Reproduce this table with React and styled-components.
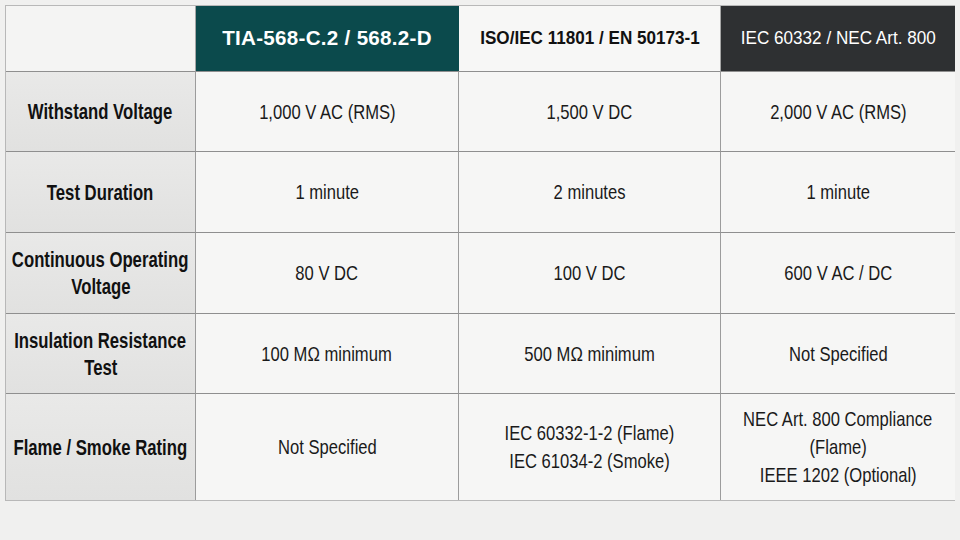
import React from "react";
import styled, { createGlobalStyle } from "styled-components";

const GlobalStyle = createGlobalStyle`
  html, body {
    margin: 0;
    padding: 0;
    background: #f0f0ef;
  }
  body {
    font-family: "Liberation Sans", Arial, sans-serif;
  }
`;

const headers = [
  { text: "", tone: "blank" },
  { text: "TIA-568-C.2 / 568.2-D", tone: "teal" },
  { text: "ISO/IEC 11801 / EN 50173-1", tone: "light" },
  { text: "IEC 60332 / NEC Art. 800", tone: "dark" },
];

const rows = [
  {
    label: ["Withstand Voltage"],
    cells: [["1,000 V AC (RMS)"], ["1,500 V DC"], ["2,000 V AC (RMS)"]],
  },
  {
    label: ["Test Duration"],
    cells: [["1 minute"], ["2 minutes"], ["1 minute"]],
  },
  {
    label: ["Continuous Operating", "Voltage"],
    cells: [["80 V DC"], ["100 V DC"], ["600 V AC / DC"]],
  },
  {
    label: ["Insulation Resistance", "Test"],
    cells: [["100 MΩ minimum"], ["500 MΩ minimum"], ["Not Specified"]],
  },
  {
    label: ["Flame / Smoke Rating"],
    cells: [
      ["Not Specified"],
      ["IEC 60332-1-2 (Flame)", "IEC 61034-2 (Smoke)"],
      ["NEC Art. 800 Compliance", "(Flame)", "IEEE 1202 (Optional)"],
    ],
    last: true,
  },
];

const App = () => {
  return (
    <>
      <GlobalStyle />
      <Page>
        <Table>
          {headers.map((h, i) => (
            <HeadCell key={i} tone={h.tone}>
              <Squeeze sx={h.tone === "teal" ? 0.98 : 0.9}>{h.text}</Squeeze>
            </HeadCell>
          ))}
          {rows.map((r, ri) => (
            <React.Fragment key={ri}>
              <LabelCell last={r.last}>
                {r.label.map((l, li) => (
                  <Squeeze key={li} sx={0.76}>
                    {l}
                  </Squeeze>
                ))}
              </LabelCell>
              {r.cells.map((c, ci) => (
                <DataCell key={ci} last={r.last} edge={ci === 2}>
                  {c.map((l, li) => (
                    <Squeeze key={li} sx={0.79}>
                      {l}
                    </Squeeze>
                  ))}
                </DataCell>
              ))}
            </React.Fragment>
          ))}
        </Table>
      </Page>
    </>
  );
};

export default App;

const Page = styled.div`
  width: 960px;
  height: 540px;
  padding: 5px 0 0 5px;
  box-sizing: border-box;
  background: #f0f0ef;
`;

const Table = styled.div`
  display: grid;
  grid-template-columns: 190px 263px 262px 234px;
  grid-template-rows: 66px 80px 81px 81px 80px 106px;
  width: 950px;
  border: 1px solid #b8b8b8;
  box-sizing: border-box;
`;

// text in the slide is set in a narrow face; squeeze a regular one
const Squeeze = styled.span`
  display: inline-block;
  white-space: nowrap;
  transform: scaleX(${(p) => p.sx});
`;

const toneBg = {
  blank: "#f4f4f3",
  teal: "#0b4a4c",
  light: "#f7f7f6",
  dark: "#2e3032",
};

const HeadCell = styled.div`
  display: flex;
  align-items: center;
  justify-content: center;
  padding-bottom: 2px;
  background: ${(p) => toneBg[p.tone]};
  color: ${(p) => (p.tone === "light" || p.tone === "blank" ? "#111" : "#fff")};
  font-weight: ${(p) => (p.tone === "dark" ? 400 : 700)};
  font-size: ${(p) => (p.tone === "teal" ? "21px" : "19px")};
  letter-spacing: ${(p) => (p.tone === "teal" ? "0.3px" : "0")};
  border-right: ${(p) => (p.tone === "blank" || p.tone === "light" ? "1px solid #a6a6a6" : "none")};
  border-bottom: 1px solid #8f8f8f;
`;

const LabelCell = styled.div`
  display: flex;
  flex-direction: column;
  align-items: center;
  justify-content: center;
  background: linear-gradient(180deg, #e9e9e8 0%, #e1e1e0 100%);
  color: #111;
  font-weight: 700;
  font-size: 22px;
  line-height: 27px;
  text-align: center;
  border-right: 1px solid #9c9c9c;
  border-bottom: ${(p) => (p.last ? "none" : "1px solid #8f8f8f")};
`;

const DataCell = styled.div`
  display: flex;
  flex-direction: column;
  align-items: center;
  justify-content: center;
  background: #f6f6f5;
  color: #1a1a1a;
  font-size: 21px;
  line-height: 28px;
  text-align: center;
  border-right: ${(p) => (p.edge ? "none" : "1px solid #9c9c9c")};
  border-bottom: ${(p) => (p.last ? "none" : "1px solid #8f8f8f")};
`;
